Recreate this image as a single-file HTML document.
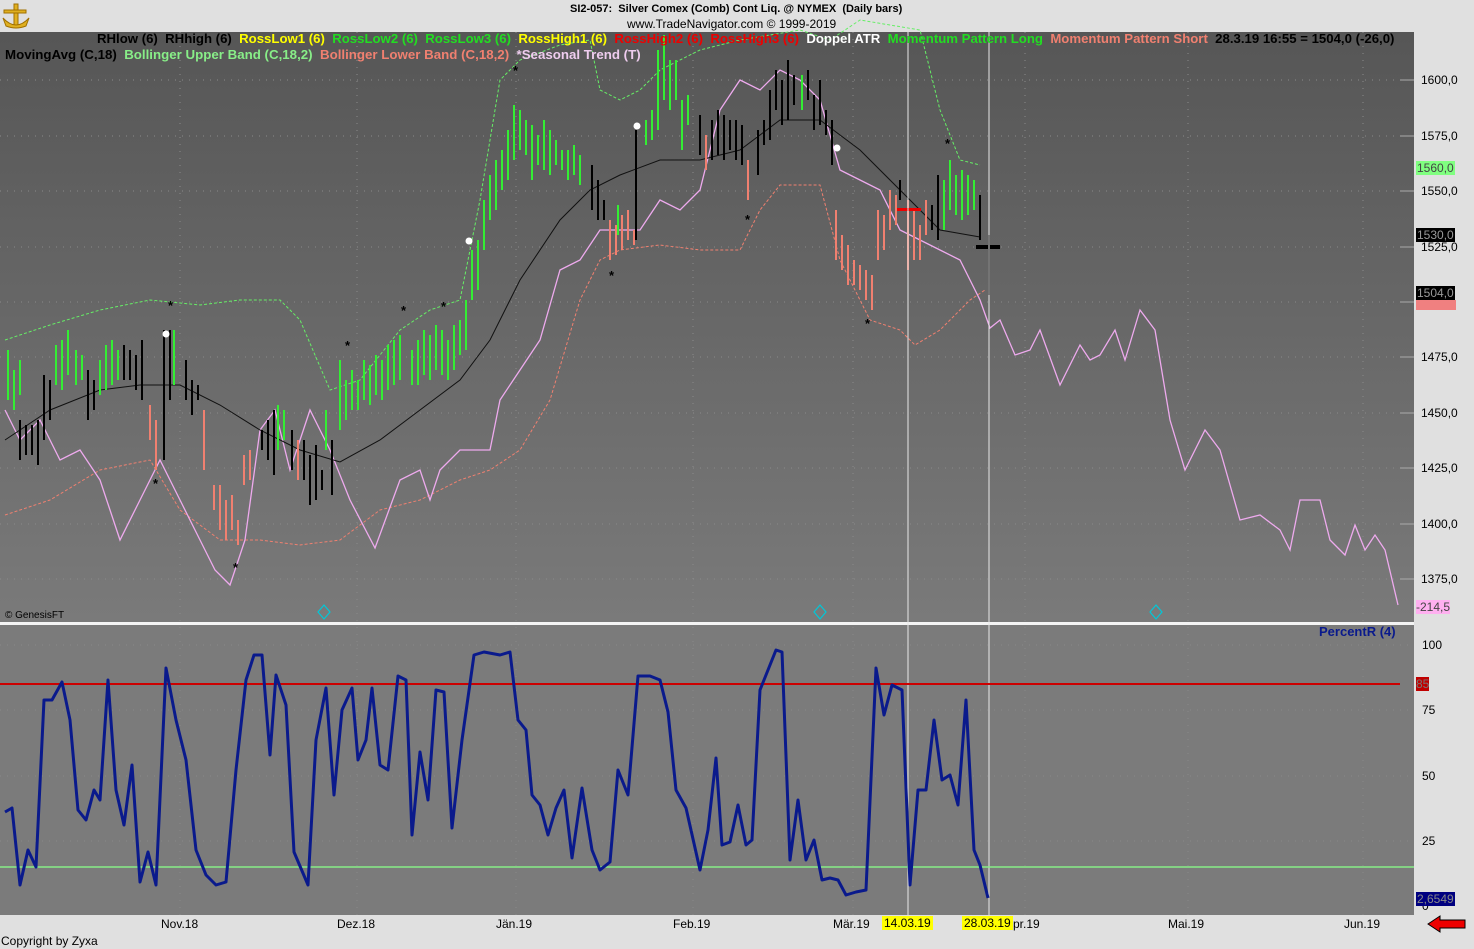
<!DOCTYPE html>
<html><head><meta charset="utf-8"><style>
body{margin:0;width:1474px;height:949px;overflow:hidden;background:#e0e0e0;font-family:"Liberation Sans",Arial,sans-serif;position:relative}
.t{position:absolute;white-space:nowrap}
</style></head><body>
<svg width="1474" height="949" style="position:absolute;left:0;top:0">
<defs><linearGradient id="g" x1="0" y1="0" x2="0" y2="1"><stop offset="0" stop-color="#565656"/><stop offset="1" stop-color="#7a7a7a"/></linearGradient></defs>
<rect x="0" y="32" width="1414" height="590" fill="url(#g)"/>
<rect x="0" y="622" width="1414" height="3" fill="#f4f4f4"/>
<rect x="0" y="625" width="1414" height="290" fill="#7b7b7b"/>
<g stroke="#8a8a8a" stroke-dasharray="1,6" stroke-width="1">
<path d="M180 32V915M357 32V915M516 32V915M693 32V915M853 32V915M1025 32V915M1188 32V915M1363 32V915"/>
<path d="M0 80H1414M0 136H1414M0 191H1414M0 247H1414M0 302H1414M0 357H1414M0 413H1414M0 468H1414M0 524H1414M0 579H1414M0 645H1414M0 710H1414M0 776H1414M0 841H1414"/>
</g>
<g fill="#e0b020" stroke="#a07000" stroke-width="1"><rect x="14" y="4" width="4" height="22"/><rect x="4" y="10" width="22" height="3"/><path d="M3 18 Q16 32 29 18 L26 26 Q16 30 6 26Z"/></g>
<polyline fill="none" stroke="#66ee66" stroke-width="1" stroke-dasharray="3,2" points="5,340 50,325 100,310 150,300 200,305 240,300 280,300 300,320 330,390 360,380 400,330 430,310 460,300 480,200 500,80 520,60 560,45 590,40 600,90 620,100 640,90 660,70 700,50 740,40 800,30 830,40 860,20 890,25 920,30 940,110 960,160 980,165"/>
<polyline fill="none" stroke="#f08070" stroke-width="1" stroke-dasharray="3,2" points="5,515 50,500 100,470 150,460 180,510 220,540 260,540 300,545 340,540 380,510 420,500 460,480 490,470 520,450 550,400 580,300 600,260 620,250 660,245 700,250 740,250 760,210 780,185 820,185 840,260 870,320 900,330 915,345 940,330 970,300 985,290"/>
<polyline fill="none" stroke="#eeaaee" stroke-width="1.3" points="5,410 20,440 40,420 60,460 80,450 100,480 120,540 140,500 160,460 180,500 200,540 215,570 230,585 245,540 260,430 275,410 290,470 310,410 330,450 350,500 375,548 400,480 420,470 430,500 440,470 460,450 490,450 500,400 520,370 540,340 560,270 580,260 600,230 620,230 640,230 660,200 680,210 700,190 720,110 740,80 760,90 780,70 800,80 820,100 840,170 860,180 880,190 900,230 920,240 940,250 960,260 980,300 990,328 1000,320 1015,355 1030,350 1040,330 1060,385 1080,345 1090,360 1100,355 1115,330 1125,360 1140,310 1155,330 1170,420 1185,470 1205,430 1220,450 1240,520 1260,515 1280,530 1290,550 1300,500 1320,500 1330,540 1345,555 1355,525 1365,550 1375,535 1385,550 1398,605"/>
<polyline fill="none" stroke="#111" stroke-width="1" points="5,440 50,410 100,390 140,385 180,385 220,405 260,430 300,450 340,462 380,440 420,410 460,380 490,340 520,280 560,220 590,190 620,175 660,160 700,160 740,150 780,120 820,120 860,150 900,190 940,230 980,237"/>
<path stroke="#33ee33" stroke-width="2" fill="none" d="M8 350V400 M14 370V410 M20 360V395 M56 345V385 M62 340V390 M68 330V375 M76 350V385 M82 355V380 M100 360V395 M106 345V390 M112 340V385 M118 350V380 M174 330V385 M278 405V450 M284 410V440 M326 410V450 M340 360V430 M346 380V420 M352 370V410 M358 380V410 M364 360V400 M370 365V405 M376 355V395 M382 360V400 M388 345V390 M394 340V385 M400 335V380 M412 350V385 M418 340V385 M424 330V375 M430 335V380 M436 325V370 M442 330V375 M448 340V380 M454 325V370 M460 320V355 M466 300V350 M472 250V300 M478 240V290 M484 200V250 M490 175V220 M496 160V210 M502 150V190 M508 130V180 M514 105V160 M520 110V150 M526 120V155 M532 125V180 M538 135V165 M544 120V170 M550 130V175 M556 140V165 M562 150V170 M568 150V180 M574 145V175 M580 155V185 M618 205V235 M646 120V145 M652 110V140 M658 50V130 M664 35V100 M670 60V110 M676 60V100 M682 100V150 M688 95V125 M944 180V230 M950 160V210 M956 175V215 M962 170V220 M968 175V215 M974 180V210 M802 75V110"/>
<path stroke="#f08070" stroke-width="2" fill="none" d="M150 405V440 M156 420V470 M204 410V470 M214 485V510 M220 485V530 M226 500V540 M232 495V530 M238 520V545 M244 455V485 M250 450V480 M298 440V480 M610 220V260 M616 225V255 M622 215V250 M628 210V240 M634 230V245 M706 135V170 M748 160V200 M836 210V260 M842 235V270 M848 245V285 M854 260V285 M860 265V290 M866 270V300 M872 275V310 M878 210V260 M884 215V250 M890 190V230 M896 195V225 M908 200V270 M914 210V260 M920 225V260 M926 200V235"/>
<path stroke="#000" stroke-width="2" fill="none" d="M20 420V460 M26 425V455 M32 425V455 M38 420V465 M44 375V440 M50 380V420 M88 370V420 M94 380V410 M124 345V380 M130 350V380 M136 355V390 M142 340V400 M164 330V460 M170 330V400 M186 360V400 M192 380V415 M198 385V400 M262 430V450 M268 420V460 M274 410V475 M292 430V470 M304 440V480 M310 455V505 M316 445V500 M322 470V490 M332 440V495 M592 165V210 M598 180V220 M604 200V220 M636 130V240 M700 115V155 M712 120V160 M718 110V155 M724 115V160 M730 120V150 M736 120V160 M742 125V165 M758 130V175 M764 120V145 M770 90V140 M776 70V110 M782 80V125 M788 60V120 M794 75V105 M808 70V100 M814 95V130 M820 80V125 M826 110V135 M832 120V165 M900 180V200 M932 205V230 M938 175V240 M980 195V240 M989 235V295"/>
<rect x="976" y="245" width="24" height="4" fill="#000"/>
<rect x="897" y="208" width="24" height="3" fill="#e00"/>
<g fill="#fff"><circle cx="166" cy="334" r="3.5"/><circle cx="469" cy="241" r="3.5"/><circle cx="637" cy="126" r="3.5"/><circle cx="837" cy="148" r="3.5"/></g>
<g font-size="13" font-weight="bold" fill="#000" font-family="Liberation Sans,sans-serif"><text x="168" y="310">*</text><text x="153" y="488">*</text><text x="233" y="572">*</text><text x="345" y="350">*</text><text x="401" y="315">*</text><text x="441" y="311">*</text><text x="513" y="75">*</text><text x="609" y="280">*</text><text x="745" y="224">*</text><text x="865" y="328">*</text><text x="945" y="148">*</text></g>
<g fill="none" stroke="#00c8d8" stroke-width="1.2"><path d="M324 605l6 7-6 7-6-7z"/><path d="M820 605l6 7-6 7-6-7z"/><path d="M1156 605l6 7-6 7-6-7z"/></g>
<path d="M908 32V915M989 32V915" stroke="#e8e8e8" stroke-width="1"/>
<path d="M0 684H1400" stroke="#cc0000" stroke-width="2"/>
<path d="M0 867H1414" stroke="#88ee88" stroke-width="1.5"/>
<polyline fill="none" stroke="#0a1a8c" stroke-width="3" stroke-linejoin="round" points="5,812 12,808 20,885 28,850 36,867 44,700 52,700 62,682 70,720 78,810 86,820 94,790 100,800 108,680 116,790 124,825 132,765 140,882 148,852 156,885 166,668 176,720 186,760 196,850 206,875 216,885 226,882 236,770 246,680 254,655 262,655 270,755 276,675 286,705 294,852 308,885 316,740 326,688 334,795 342,710 352,688 358,760 366,740 372,688 380,765 388,770 398,676 406,680 412,835 420,752 428,800 436,690 444,692 452,828 462,740 474,655 484,652 500,655 510,652 518,720 526,730 532,795 540,805 548,835 556,808 564,790 572,858 582,788 592,850 600,870 610,862 618,770 628,795 638,676 650,676 660,680 668,712 676,790 686,808 700,870 708,830 716,758 722,845 730,842 738,805 746,845 752,840 760,690 768,670 776,650 782,652 790,860 798,800 806,860 814,840 822,880 830,878 838,880 846,895 856,892 866,890 876,668 884,715 892,685 902,690 910,885 918,790 926,790 934,720 942,780 950,775 958,805 966,700 974,850 980,865 988,898"/>
<g stroke="#aaa"><path d="M1400 80H1414M1400 136H1414M1400 191H1414M1400 247H1414M1400 302H1414M1400 357H1414M1400 413H1414M1400 468H1414M1400 524H1414M1400 579H1414"/></g>
<path d="M1428 924l12-8v4h25v8h-25v4z" fill="#ee0000" stroke="#000" stroke-width="1"/>
</svg>
<div class="t" style="left:570px;top:3px;font-size:11px;font-weight:bold">SI2-057:&nbsp; Silver Comex (Comb) Cont Liq. @ NYMEX&nbsp; (Daily bars)</div>
<div class="t" style="left:627px;top:17px;font-size:12px">www.TradeNavigator.com © 1999-2019</div>
<div class="t" style="left:97px;top:31px;font-size:13.2px;font-weight:bold"><span style="color:#000">RHlow (6)</span>&nbsp; <span>RHhigh (6)</span>&nbsp; <span style="color:#ffff00">RossLow1 (6)</span>&nbsp; <span style="color:#22dd22">RossLow2 (6)</span>&nbsp; <span style="color:#22dd22">RossLow3 (6)</span>&nbsp; <span style="color:#ffff00">RossHigh1 (6)</span>&nbsp; <span style="color:#ee0000">RossHigh2 (6)</span>&nbsp; <span style="color:#ee0000">RossHigh3 (6)</span>&nbsp; <span style="color:#fff">Doppel ATR</span>&nbsp; <span style="color:#22dd22">Momentum Pattern Long</span>&nbsp; <span style="color:#f08070">Momentum Pattern Short</span>&nbsp; <span>28.3.19 16:55 = 1504,0 (-26,0)</span></div>
<div class="t" style="left:5px;top:47px;font-size:13.3px;font-weight:bold"><span>MovingAvg (C,18)</span>&nbsp; <span style="color:#88ee88">Bollinger Upper Band (C,18,2)</span>&nbsp; <span style="color:#f08070">Bollinger Lower Band (C,18,2)</span>&nbsp; <span style="color:#eeccee">*Seasonal Trend (T)</span></div>
<div class="t" style="left:5px;top:610px;font-size:10px">© GenesisFT</div>
<div class="t" style="left:1319px;top:624px;font-size:13px;font-weight:bold;color:#0a1a8c">PercentR (4)</div>
<div style="font-size:12px">
<div class="t" style="left:1421px;top:73px">1600,0</div>
<div class="t" style="left:1421px;top:129px">1575,0</div>
<div class="t" style="left:1416px;top:161px;background:#80ff80;color:#444;padding:0 1px">1560,0</div>
<div class="t" style="left:1421px;top:184px">1550,0</div>
<div class="t" style="left:1421px;top:240px">1525,0</div>
<div class="t" style="left:1416px;top:228px;background:#000;color:#999;padding:0 1px">1530,0</div>
<div class="t" style="left:1416px;top:300px;width:40px;height:10px;background:#f08080"></div>
<div class="t" style="left:1416px;top:286px;background:#000;color:#999;padding:0 1px">1504,0</div>
<div class="t" style="left:1421px;top:350px">1475,0</div>
<div class="t" style="left:1421px;top:406px">1450,0</div>
<div class="t" style="left:1421px;top:461px">1425,0</div>
<div class="t" style="left:1421px;top:517px">1400,0</div>
<div class="t" style="left:1421px;top:572px">1375,0</div>
<div class="t" style="left:1416px;top:600px;background:#ffb0f0;color:#444">-214,5</div>
<div class="t" style="left:1422px;top:638px">100</div>
<div class="t" style="left:1416px;top:677px;background:#c00000;color:#777">85</div>
<div class="t" style="left:1422px;top:703px">75</div>
<div class="t" style="left:1422px;top:769px">50</div>
<div class="t" style="left:1422px;top:834px">25</div>
<div class="t" style="left:1422px;top:899px">0</div>
<div class="t" style="left:1416px;top:892px;background:#000080;color:#888;padding:0 1px">2,6549</div>
<div class="t" style="left:161px;top:917px">Nov.18</div>
<div class="t" style="left:337px;top:917px">Dez.18</div>
<div class="t" style="left:496px;top:917px">Jän.19</div>
<div class="t" style="left:673px;top:917px">Feb.19</div>
<div class="t" style="left:833px;top:917px">Mär.19</div>
<div class="t" style="left:1005px;top:917px">Apr.19</div>
<div class="t" style="left:1168px;top:917px">Mai.19</div>
<div class="t" style="left:1344px;top:917px">Jun.19</div>
<div class="t" style="left:882px;top:916px;background:#ffff00;padding:0 2px">14.03.19</div>
<div class="t" style="left:962px;top:916px;background:#ffff00;padding:0 2px">28.03.19</div>
<div class="t" style="left:1px;top:934px">Copyright by Zyxa</div>
</div>
</body></html>
